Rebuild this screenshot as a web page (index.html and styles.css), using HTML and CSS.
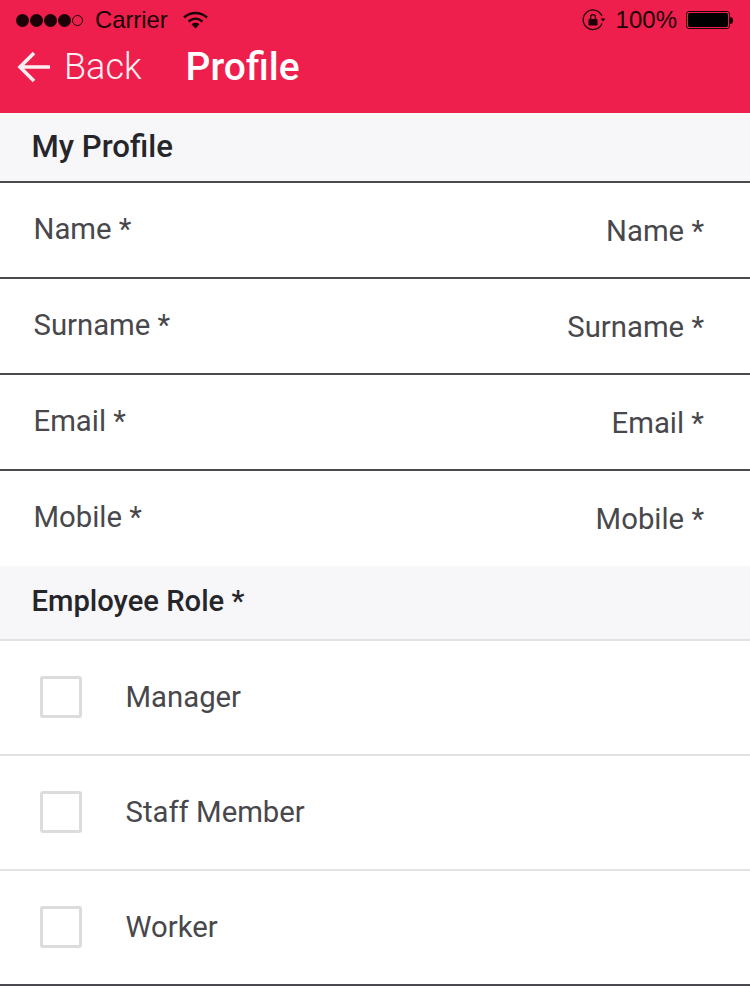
FILE: index.html
```html
<!DOCTYPE html>
<html lang="en">
<head>
    <meta charset="UTF-8">
    <meta name="viewport" content="width=device-width, initial-scale=1.0">
    <title>Profile</title>
    <link rel="stylesheet" href="styles.css">
</head>
<body>

<header class="app-header">
    <div class="status-bar">
        <div class="status-left">
            <div class="signal">
                <span class="dot"></span>
                <span class="dot"></span>
                <span class="dot"></span>
                <span class="dot"></span>
                <span class="dot empty"></span>
            </div>
            <span class="carrier">Carrier</span>
            <svg class="wifi" width="25" height="18" viewBox="0 0 25 18">
                <path d="M1 6.5C8 0.5 17 0.5 24 6.5" fill="none" stroke="#1c0208" stroke-width="2.4"/>
                <path d="M5.5 10.5C10 6.8 15 6.8 19.5 10.5" fill="none" stroke="#1c0208" stroke-width="2.4"/>
                <path d="M8.5 13.2C11 11.4 14 11.4 16.5 13.2L12.5 17.5Z" fill="#1c0208"/>
            </svg>
        </div>
        <div class="status-right">
            <svg class="lock" width="24" height="24" viewBox="0 0 24 24">
                <path d="M20 15.5A9.8 9.8 0 1 1 20 8" fill="none" stroke="#1c0208" stroke-width="1.3"/>
                <path d="M18.5 10.5H23.5L21 13.5Z" fill="#1c0208"/>
                <rect x="6.5" y="11" width="9" height="6.5" rx="1" fill="#1c0208"/>
                <path d="M8.6 11V9a2.4 2.4 0 0 1 4.8 0v2" fill="none" stroke="#1c0208" stroke-width="1.3"/>
            </svg>
            <span class="battery-text">100%</span>
            <div class="battery">
                <div class="battery-fill"></div>
            </div>
            <div class="battery-cap"></div>
        </div>
    </div>
    <div class="nav-bar">
        <a class="back" href="#">
            <svg width="36" height="34" viewBox="0 0 36 34">
                <path d="M34 17H4M18 3L4 17L18 31" fill="none" stroke="#fdeef1" stroke-width="3.6"/>
            </svg>
            <span>Back</span>
        </a>
        <h1 class="nav-title">Profile</h1>
    </div>
</header>

<section class="section-title first">My Profile</section>

<div class="field">
    <label>Name *</label>
    <span class="placeholder">Name *</span>
</div>
<div class="field">
    <label>Surname *</label>
    <span class="placeholder">Surname *</span>
</div>
<div class="field">
    <label>Email *</label>
    <span class="placeholder">Email *</span>
</div>
<div class="field last">
    <label>Mobile *</label>
    <span class="placeholder">Mobile *</span>
</div>

<section class="section-title role">Employee Role *</section>

<div class="check-row">
    <span class="checkbox"></span>
    <span class="check-label">Manager</span>
</div>
<div class="check-row">
    <span class="checkbox"></span>
    <span class="check-label">Staff Member</span>
</div>
<div class="check-row last">
    <span class="checkbox"></span>
    <span class="check-label">Worker</span>
</div>

<div class="page-end"></div>

</body>
</html>
```

FILE: styles.css
```css
body {
    font-family: Roboto, "Liberation Sans", sans-serif;
    margin: 0;
    padding: 0;
    background-color: #ffffff;
    color: #48484c;
}

.app-header {
    background-color: #ee1f4c;
    height: 113px;
}

.status-bar {
    display: flex;
    justify-content: space-between;
    align-items: center;
    height: 40px;
    padding: 0 17px 0 16px;
    color: #1c0208;
    font-family: "Liberation Sans", Arial, sans-serif;
    font-size: 23px;
}

.status-left,
.status-right {
    display: flex;
    align-items: center;
}

.signal {
    display: flex;
    gap: 1px;
    margin-right: 12px;
}

.dot {
    width: 13px;
    height: 13px;
    border-radius: 50%;
    background-color: #1c0208;
}

.dot.empty {
    width: 11px;
    height: 11px;
    margin-top: 1px;
    background-color: transparent;
    border: 1px solid #1c0208;
    box-sizing: border-box;
}

.carrier {
    font-size: 23.8px;
}

.wifi {
    margin-left: 15px;
}

.lock {
    margin-right: 10px;
}

.battery-text {
    font-size: 24px;
}

.battery {
    width: 44px;
    height: 18px;
    margin-left: 9px;
    padding: 1px;
    box-sizing: border-box;
    border: 1px solid #1c0208;
    border-radius: 3px;
}

.battery-fill {
    height: 100%;
    background-color: #000000;
    border-radius: 2px;
}

.battery-cap {
    width: 3px;
    height: 7px;
    background-color: #1c0208;
    border-radius: 0 3px 3px 0;
}

.nav-bar {
    display: flex;
    align-items: center;
    height: 53px;
    padding-left: 16px;
}

.back {
    display: flex;
    align-items: center;
    gap: 12px;
    color: #fdeef1;
    text-decoration: none;
    font-size: 36px;
    font-weight: 300;
}

.nav-title {
    margin: 0 0 0 44px;
    color: #ffffff;
    font-size: 39px;
    font-weight: 500;
}

.section-title {
    display: flex;
    align-items: center;
    box-sizing: border-box;
    padding-left: 31.5px;
    background-color: #f7f7f9;
    color: #26262a;
    font-weight: 500;
}

.section-title.first {
    height: 70px;
    padding-bottom: 2px;
    border-bottom: 2px solid #4a4a4e;
    font-size: 31.2px;
}

.section-title.role {
    height: 75px;
    padding-bottom: 4px;
    border-bottom: 2px solid #e2e2e4;
    font-size: 29.2px;
}

.field {
    display: flex;
    justify-content: space-between;
    height: 94px;
    padding: 0 46px 0 33.5px;
    border-bottom: 2px solid #4a4a4e;
    font-size: 29.3px;
}

.field.last {
    height: 95px;
    border-bottom: none;
}

.field label {
    margin-top: 29px;
}

.placeholder {
    margin-top: 31px;
}

.check-row {
    display: flex;
    align-items: center;
    box-sizing: border-box;
    height: 115px;
    padding: 0 0 1px 40px;
    border-bottom: 2px solid #e2e2e4;
    font-size: 29.3px;
}

.check-row.last {
    border-bottom: 2px solid #4a4a4e;
}

.checkbox {
    width: 42px;
    height: 42px;
    box-sizing: border-box;
    border: 3px solid #dcdcde;
    border-radius: 3px;
}

.check-label {
    margin-left: 43.5px;
}

.page-end {
    height: 14px;
}
```
